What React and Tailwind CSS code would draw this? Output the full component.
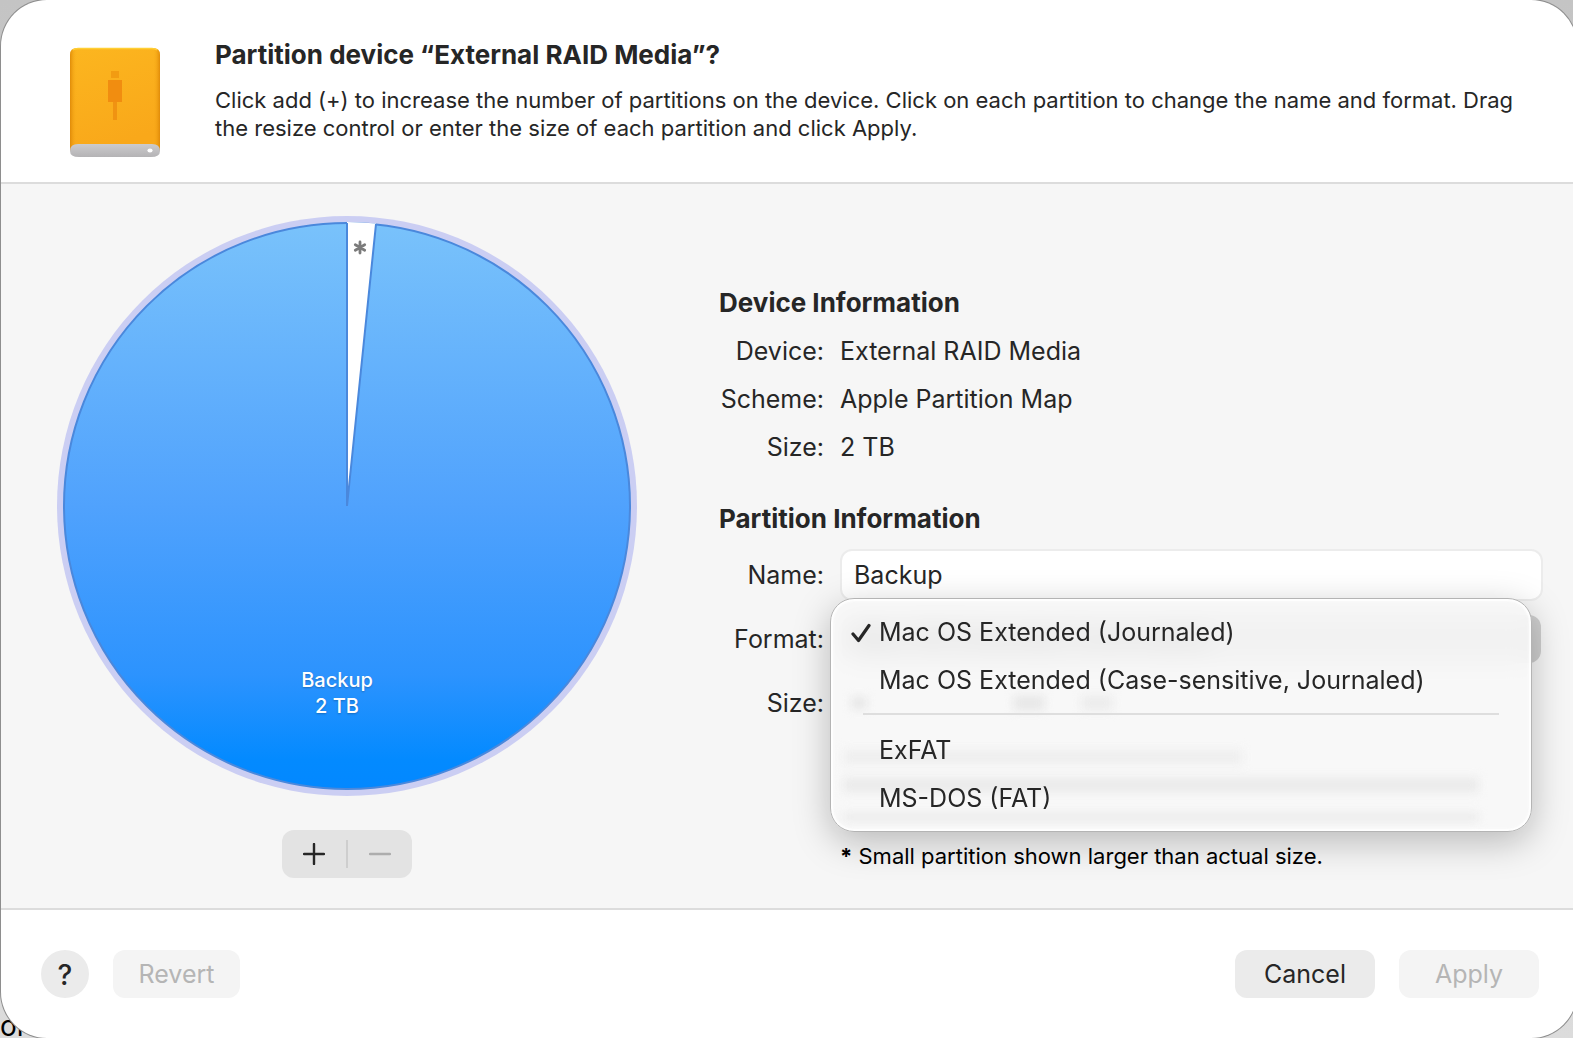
import React, { useState } from 'react';

const deviceInfo = [
    { label: 'Device:', value: 'External RAID Media' },
    { label: 'Scheme:', value: 'Apple Partition Map' },
    { label: 'Size:', value: '2 TB' }
];

const journaledFormats = ['Mac OS Extended (Journaled)', 'Mac OS Extended (Case-sensitive, Journaled)'];
const otherFormats = ['ExFAT', 'MS-DOS (FAT)'];

function DriveIcon() {
    return (
        <svg width="92" height="112" viewBox="0 0 92 112" className="shrink-0" aria-hidden="true">
            <defs>
                <linearGradient id="driveBody" x1="0" y1="0" x2="0.3" y2="1">
                    <stop offset="0" stopColor="#fcb61f" />
                    <stop offset="1" stopColor="#f9a81a" />
                </linearGradient>
                <linearGradient id="driveEdge" x1="0" y1="0" x2="1" y2="0">
                    <stop offset="0" stopColor="#d98204" stopOpacity="0.8" />
                    <stop offset="0.04" stopColor="#e8950c" stopOpacity="0.3" />
                    <stop offset="0.08" stopColor="#fbb01c" stopOpacity="0" />
                    <stop offset="0.92" stopColor="#fbb01c" stopOpacity="0" />
                    <stop offset="0.96" stopColor="#e8950c" stopOpacity="0.3" />
                    <stop offset="1" stopColor="#d98204" stopOpacity="0.8" />
                </linearGradient>
                <linearGradient id="driveBase" x1="0" y1="0" x2="0" y2="1">
                    <stop offset="0" stopColor="#cccbcd" />
                    <stop offset="1" stopColor="#b4b3b5" />
                </linearGradient>
            </defs>
            <path d="M1 8Q1 1 8 1H84Q91 1 91 8V104H1Z" fill="url(#driveBody)" />
            <path d="M1 8Q1 1 8 1H84Q91 1 91 8V104H1Z" fill="url(#driveEdge)" />
            <path d="M4 3Q6 1.500 9 1.500H83Q86 1.500 88 3" stroke="#ffcf33" strokeWidth="1.500" fill="none" />
            <path d="M1 104Q1 97 9 97H83Q91 97 91 104Q91 110 82 110H10Q1 110 1 104Z" fill="url(#driveBase)" />
            <ellipse cx="81" cy="103.500" rx="2.600" ry="2" fill="#fff" />
            <rect x="42" y="24" width="8" height="7" fill="#f29c12" />
            <rect x="39" y="33" width="14" height="22" fill="#f18d10" />
            <rect x="44" y="55" width="4" height="18" fill="#f09312" />
        </svg>
    );
}

function PartitionChart() {
    return (
        <svg viewBox="0 0 580 580" className="w-[580px] h-[580px]" role="img" aria-label="Partition chart">
            <defs>
                <linearGradient id="partition" x1="0" y1="0" x2="0" y2="1">
                    <stop offset="0" stopColor="#79c2fb" />
                    <stop offset="0.5" stopColor="#50a2fd" />
                    <stop offset="0.8" stopColor="#2c93fe" />
                    <stop offset="0.95" stopColor="#038aff" />
                    <stop offset="1" stopColor="#0388ff" />
                </linearGradient>
            </defs>
            <circle cx="290" cy="290" r="290" fill="#cbcef3" />
            <circle cx="290" cy="290" r="283" fill="url(#partition)" stroke="#4a88dc" strokeWidth="2" />
            <path d="M290 290V6A284 284 0 0 1 319 7.500Z" fill="#fff" />
            <path d="M290 7V290L319 8" fill="none" stroke="#4a88dc" strokeWidth="2" />
            <path
                d="M303 26V37M298.300 28.700L307.700 34.300M307.700 28.700L298.300 34.300"
                stroke="#7b7b7b"
                strokeWidth="2.800"
                strokeLinecap="round"
            />
            <g
                fill="#fff"
                textAnchor="middle"
                className="text-[20px] font-medium [text-shadow:0_1px_2px_#00000040]"
            >
                <text x="280" y="471">Backup</text>
                <text x="280" y="497">2 TB</text>
            </g>
        </svg>
    );
}

function CheckIcon() {
    return (
        <svg width="21" height="20" viewBox="0 0 21 20" fill="none" stroke="#262626" strokeWidth="3.200" strokeLinecap="round" strokeLinejoin="round">
            <path d="M2 11L7.500 17.500L18 2.500" />
        </svg>
    );
}

function FormatItem({ name, selected, onSelect }) {
    return (
        <button
            role="menuitemradio"
            aria-checked={selected}
            onClick={() => onSelect(name)}
            className="relative flex h-12 w-full items-center pl-4 text-left"
        >
            <span className="flex w-8 pl-1">{selected && <CheckIcon />}</span>
            {name}
        </button>
    );
}

function App() {
    const [name, setName] = useState('Backup');
    const [format, setFormat] = useState(journaledFormats[0]);

    return (
        <div className="relative flex min-h-screen overflow-hidden bg-gradient-to-b from-[#c4c4c4] to-[#dcdcdc] pl-px font-[Inter,sans-serif] text-[25px] text-[#262626]">
            {/* Window behind the sheet */}
            <p className="absolute -bottom-1 left-0 text-[28px] leading-8 text-black">or</p>

            <div className="relative -mr-1 flex flex-1 flex-col overflow-hidden rounded-[46px] bg-white shadow-[0_0_0_1px_#8e8e8e]">
                {/* Header */}
                <header className="flex h-[184px] gap-[54px] border-b-2 border-[#dcdcdc] pt-[47px] pl-[68px] pr-9">
                    <DriveIcon />
                    <div className="-mt-2">
                        <h1 className="text-[26px] leading-8 font-bold">Partition device “External RAID Media”?</h1>
                        <p className="mt-[15px] text-[22px] leading-7">
                            Click add (+) to increase the number of partitions on the device. Click on each partition to change the name and format. Drag the resize control or enter the size of each partition and click Apply.
                        </p>
                    </div>
                </header>

                {/* Partition map and details */}
                <main className="flex flex-1 gap-[82px] bg-[#f6f6f6] pt-8 pr-[34px] pb-[30px] pl-14">
                    <section className="flex shrink-0 flex-col items-center gap-[34px]">
                        <PartitionChart />
                        <div className="flex h-12 w-[130px] items-center rounded-xl bg-[#e3e3e3]">
                            <button aria-label="Add partition" className="flex flex-1 justify-center">
                                <svg width="22" height="22" viewBox="0 0 22 22" stroke="#262626" strokeWidth="2.400" strokeLinecap="round">
                                    <path d="M11 1V21M1 11H21" />
                                </svg>
                            </button>
                            <span className="h-7 w-0.5 bg-[#cecece]" />
                            <button aria-label="Remove partition" disabled className="flex flex-1 justify-center">
                                <svg width="22" height="22" viewBox="0 0 22 22" stroke="#adadad" strokeWidth="2.400" strokeLinecap="round">
                                    <path d="M1 11H21" />
                                </svg>
                            </button>
                        </div>
                    </section>

                    <section className="min-w-0 flex-1 pt-[63px]">
                        <h2 className="text-[26px] leading-[48px] font-bold">Device Information</h2>
                        <dl>
                            {deviceInfo.map((row) => (
                                <div key={row.label} className="grid grid-cols-[105px_1fr] gap-4 leading-[48px]">
                                    <dt className="text-right">{row.label}</dt>
                                    <dd>{row.value}</dd>
                                </div>
                            ))}
                        </dl>

                        <h2 className="mt-6 text-[26px] leading-[48px] font-bold">Partition Information</h2>
                        <div className="mt-1.5 grid grid-cols-[105px_1fr] items-center gap-x-4 gap-y-3">
                            <label htmlFor="name" className="pt-0.5 text-right">Name:</label>
                            <input
                                id="name"
                                value={name}
                                onChange={(e) => setName(e.target.value)}
                                className="h-[52px] w-full rounded-xl border-2 border-[#ececec] bg-white px-3 outline-none"
                            />

                            <label htmlFor="format" className="pt-0.5 text-right">Format:</label>
                            <div className="relative">
                                <select
                                    id="format"
                                    value={format}
                                    onChange={(e) => setFormat(e.target.value)}
                                    className="block h-[52px] w-full appearance-none rounded-[14px] border-2 border-transparent bg-[#cecece] bg-clip-padding px-3"
                                >
                                    {[...journaledFormats, ...otherFormats].map((item) => (
                                        <option key={item}>{item}</option>
                                    ))}
                                </select>

                                {/* Open format menu */}
                                <div
                                    role="menu"
                                    className="absolute -top-[15px] right-[11px] -left-2.5 z-10 rounded-3xl border border-[#b4b4b4] bg-[#f8f8f8]/85 pt-2.5 pb-2 shadow-[inset_0_0_2px_2px_#ffffff,0_10px_36px_#00000040] backdrop-blur-md"
                                >
                                    {/* Fields showing through the glass */}
                                    <div aria-hidden="true" className="absolute inset-x-3 top-[94px] flex flex-col blur-[5px]">
                                        <div className="flex h-5 items-center">
                                            <span className="ml-2 h-3 w-4 bg-[#e6e6e6]" />
                                            <span className="ml-[146px] h-4 w-8 bg-[#e8e8e8]" />
                                            <span className="ml-9 h-4 w-8 bg-[#ececec]" />
                                        </div>
                                        <span className="mt-9 h-4 w-[400px] bg-[#efefef]" />
                                        <span className="mt-3 h-4 w-[636px] bg-[#ebebeb]" />
                                        <span className="mt-5 h-2 w-[636px] bg-[#e9e9e9]" />
                                    </div>
                                    {journaledFormats.map((item) => (
                                        <FormatItem key={item} name={item} selected={item === format} onSelect={setFormat} />
                                    ))}
                                    <hr className="relative mt-2 mr-8 mb-3 ml-8 border-t-2 border-[#dedede]" />
                                    {otherFormats.map((item) => (
                                        <FormatItem key={item} name={item} selected={item === format} onSelect={setFormat} />
                                    ))}
                                </div>
                            </div>

                            <span className="text-right leading-[52px]">Size:</span>
                        </div>
                        <p className="mt-[111px] pl-[121px] text-[22px] leading-8 text-black">
                            <b>*</b> Small partition shown larger than actual size.
                        </p>
                    </section>
                </main>

                {/* Footer */}
                <footer className="flex h-[130px] items-center gap-6 border-t-2 border-[#dcdcdc] pr-[38px] pl-10">
                    <button aria-label="Help" className="size-12 rounded-full bg-[#ebebeb] pt-0.5 text-[28px] font-medium">?</button>
                    <button disabled className="h-12 w-[127px] rounded-xl bg-[#f4f4f4] pt-0.5 text-[#b5b5b5]">Revert</button>
                    <button className="ml-auto h-12 w-[140px] rounded-xl bg-[#ebebeb] pt-0.5">Cancel</button>
                    <button disabled className="h-12 w-[140px] rounded-xl bg-[#f4f4f4] pt-0.5 text-[#b5b5b5]">Apply</button>
                </footer>
            </div>
        </div>
    );
}

export default App;
